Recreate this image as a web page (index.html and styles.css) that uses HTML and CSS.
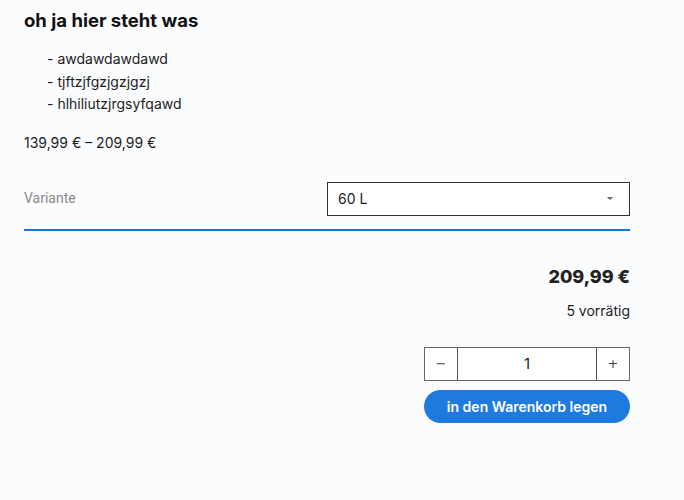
FILE: index.html
```html
<!DOCTYPE html>
<html lang="de">
<head>
    <meta charset="UTF-8">
    <meta name="viewport" content="width=device-width, initial-scale=1.0">
    <title>oh ja hier steht was</title>
    <link rel="stylesheet" href="styles.css">
</head>
<body>
    <div class="product">
        <h1>oh ja hier steht was</h1>
        <ul class="notes">
            <li>- awdawdawdawd</li>
            <li>- tjftzjfgzjgzjgzj</li>
            <li>- hlhiliutzjrgsyfqawd</li>
        </ul>
        <p class="range">139,99 € – 209,99 €</p>

        <div class="variant-row">
            <label for="variant">Variante</label>
            <div class="select">
                <span>60 L</span>
                <span class="caret"></span>
            </div>
        </div>

        <div class="buy">
            <div class="price">209,99 €</div>
            <div class="stock">5 vorrätig</div>
            <div class="qty">
                <button class="qty-btn" type="button">−</button>
                <div class="qty-value">1</div>
                <button class="qty-btn" type="button">+</button>
            </div>
            <button class="cart" type="button">in den Warenkorb legen</button>
        </div>
    </div>
</body>
</html>
```

FILE: styles.css
```css
body {
    margin: 0;
    background-color: #fbfcfe;
    font-family: Inter, "Noto Sans", sans-serif;
    color: #1d1d1d;
}
.product {
    width: 606px;
    padding: 10px 24px;
}
h1 {
    margin: 0;
    font-size: 18.5px;
    font-weight: 700;
    line-height: 21px;
    color: #111;
}
.notes {
    list-style: none;
    margin: 17px 0 0;
    padding-left: 23px;
    font-size: 14px;
    line-height: 22.5px;
}
.range {
    margin: 16px 0 0;
    font-size: 14px;
    line-height: 22px;
}
.variant-row {
    display: flex;
    justify-content: space-between;
    align-items: flex-start;
    margin-top: 28px;
    padding-bottom: 13px;
    border-bottom: 2px solid #1c74dc;
}
.variant-row label {
    font-family: Roboto, sans-serif;
    font-size: 14px;
    color: #8a8a8a;
    margin-top: 8px;
}
.select {
    box-sizing: border-box;
    width: 303px;
    height: 34px;
    border: 1px solid #333;
    background: #fff;
    display: flex;
    justify-content: space-between;
    align-items: center;
    padding: 0 16px 0 10px;
    font-size: 14px;
}
.caret {
    width: 0;
    height: 0;
    border-left: 3px solid transparent;
    border-right: 3px solid transparent;
    border-top: 3px solid #666;
}
.buy {
    display: flex;
    flex-direction: column;
    align-items: flex-end;
    margin-top: 35px;
}
.price {
    font-size: 18px;
    font-weight: 800;
    line-height: 22px;
    color: #222;
}
.stock {
    margin-top: 13px;
    font-size: 14px;
    line-height: 20px;
}
.qty {
    display: flex;
    margin-top: 26px;
    width: 206px;
    height: 34px;
    border: 1px solid #666;
    box-sizing: border-box;
    background: #fff;
}
.qty-btn {
    width: 32px;
    border: none;
    background: #fff;
    font-family: "DejaVu Sans", sans-serif;
    font-size: 13px;
    color: #444;
    padding: 0;
}
.qty-value {
    flex: 1;
    border-left: 1px solid #555;
    border-right: 1px solid #555;
    display: flex;
    align-items: center;
    justify-content: center;
    font-size: 15px;
}
.cart {
    margin-top: 9px;
    width: 206px;
    height: 33px;
    border: none;
    border-radius: 17px;
    background-color: #1f7ae0;
    color: #fff;
    font-family: Inter, sans-serif;
    font-size: 14px;
    font-weight: 600;
}
```
